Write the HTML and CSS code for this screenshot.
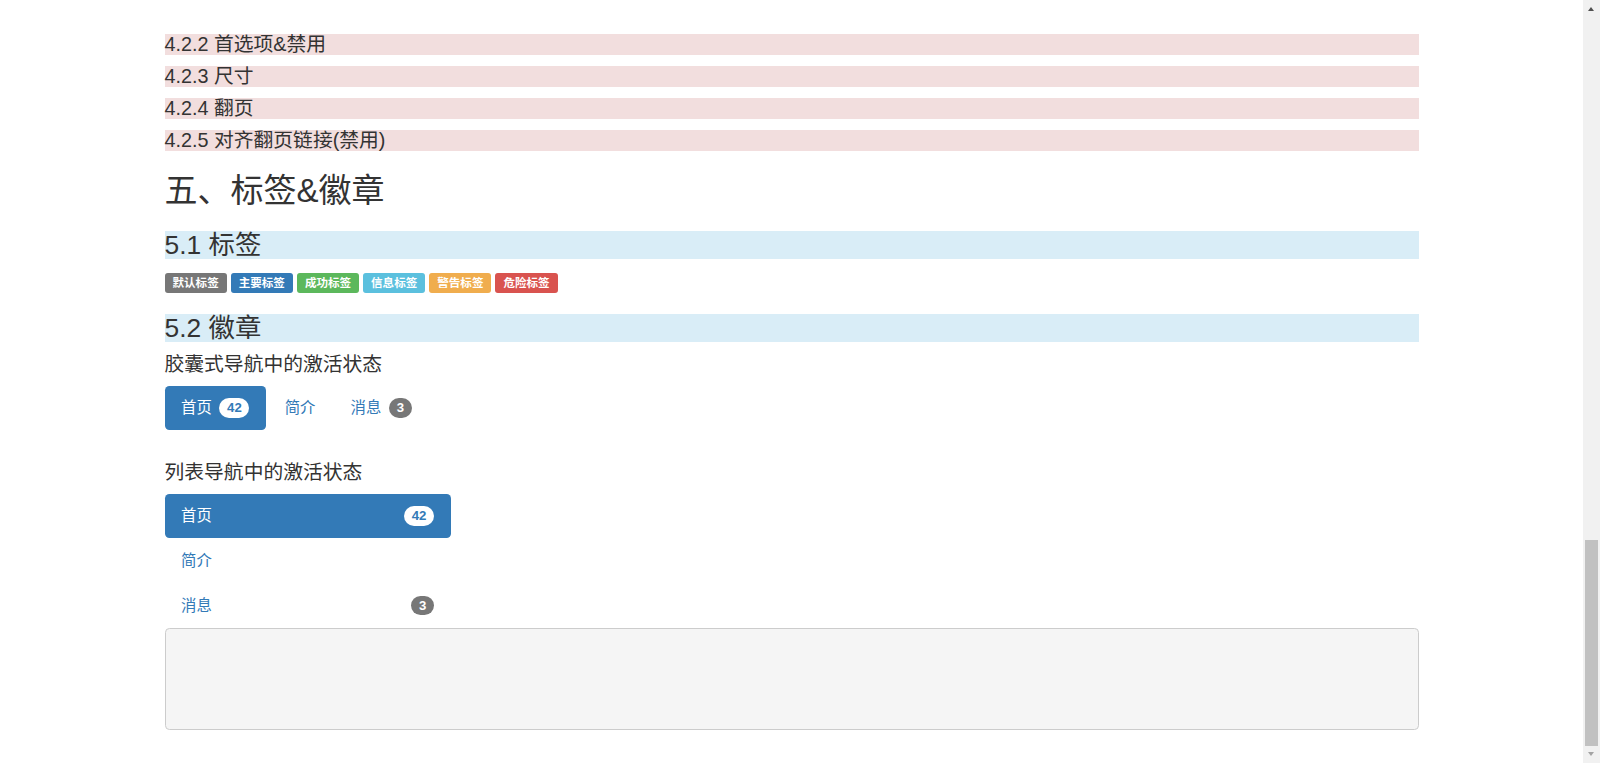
FILE: index.html
```html
<!DOCTYPE html>
<html lang="zh-CN">
<head>
<meta charset="utf-8">
<title>标签&amp;徽章</title>
<link rel="stylesheet" href="styles.css">
</head>
<body>
<div class="page">
  <div class="container">
    <h4 class="bg-danger">4.2.2 首选项&amp;禁用</h4>
    <h4 class="bg-danger">4.2.3 尺寸</h4>
    <h4 class="bg-danger">4.2.4 翻页</h4>
    <h4 class="bg-danger">4.2.5 对齐翻页链接(禁用)</h4>
    <h2>五、标签&amp;徽章</h2>
    <h3 class="bg-info">5.1 标签</h3>
    <div class="labels">
      <span class="label label-default">默认标签</span>
      <span class="label label-primary">主要标签</span>
      <span class="label label-success">成功标签</span>
      <span class="label label-info">信息标签</span>
      <span class="label label-warning">警告标签</span>
      <span class="label label-danger">危险标签</span>
    </div>
    <h3 class="bg-info h3-second">5.2 徽章</h3>
    <h4 class="caption">胶囊式导航中的激活状态</h4>
    <ul class="nav nav-pills">
      <li class="active"><a href="#">首页<span class="badge">42</span></a></li>
      <li><a href="#">简介</a></li>
      <li><a href="#">消息<span class="badge">3</span></a></li>
    </ul>
    <h4 class="caption caption-list">列表导航中的激活状态</h4>
    <ul class="nav nav-stacked">
      <li class="active"><a href="#">首页<span class="badge">42</span></a></li>
      <li><a href="#">简介</a></li>
      <li><a href="#">消息<span class="badge">3</span></a></li>
    </ul>
    <pre class="box"></pre>
  </div>
</div>
<div class="scrollbar">
  <span class="sb-up"></span>
  <span class="sb-thumb"></span>
  <span class="sb-down"></span>
</div>
</body>
</html>
```
FILE: styles.css
```css
html, body {
  margin: 0;
  padding: 0;
}
body {
  font-family: "Liberation Sans", "Noto Sans CJK SC", sans-serif;
  font-size: 15.4px;
  line-height: 22px;
  color: #333;
  background: #fff;
}
.page {
  width: 1583px;
}
.container {
  width: 1254px;
  margin: 0 auto;
  padding-top: 34px;
}
h2, h3, h4 {
  font-weight: 400;
  color: #333;
}
h4 {
  font-size: 19.8px;
  line-height: 21px;
  height: 21px;
  margin: 0 0 11px;
}
h2 {
  font-size: 33px;
  line-height: 36px;
  margin: 22px 0 0;
}
h3 {
  font-size: 26.4px;
  line-height: 28px;
  margin: 22px 0 11px;
}
.h3-second {
  margin-top: 21px;
}
.bg-danger {
  background-color: #f2dede;
}
.bg-info {
  background-color: #d9edf7;
}
.labels {
  display: flex;
  gap: 4px;
  padding-top: 3px;
}
.label {
  display: flex;
  align-items: center;
  justify-content: center;
  height: 20px;
  padding: 0 8px;
  font-size: 11.55px;
  font-weight: 700;
  color: #fff;
  border-radius: 2.9px;
  white-space: nowrap;
}
.label-default { background: #777; }
.label-primary { background: #337ab7; }
.label-success { background: #5cb85c; }
.label-info { background: #5bc0de; }
.label-warning { background: #f0ad4e; }
.label-danger { background: #d9534f; }
.caption {
  height: 22px;
  line-height: 22px;
  margin: 0 0 11px;
}
.caption-list {
  margin-top: 31px;
}
.nav {
  list-style: none;
  margin: 0;
  padding: 0;
}
.nav a {
  display: flex;
  align-items: center;
  padding: 11px 16.5px;
  line-height: 22px;
  border-radius: 4.4px;
  color: #337ab7;
  text-decoration: none;
}
.nav-pills {
  display: flex;
}
.nav-pills li + li {
  margin-left: 2.2px;
}
.nav-stacked {
  width: 286px;
}
.nav-stacked li + li {
  margin-top: 0.8px;
}
.nav-stacked a {
  justify-content: space-between;
}
.nav .active a {
  background: #337ab7;
  color: #fff;
}
.badge {
  display: inline-block;
  box-sizing: border-box;
  min-width: 11px;
  padding: 3.3px 7.7px;
  font-size: 13.2px;
  font-weight: 700;
  line-height: 1;
  color: #fff;
  text-align: center;
  background: #777;
  border-radius: 11px;
  margin-left: 7.6px;
}
.nav .active .badge {
  background: #fff;
  color: #337ab7;
}
.box {
  box-sizing: border-box;
  height: 102px;
  margin: 0;
  background: #f5f5f5;
  border: 1px solid #ccc;
  border-radius: 4.4px;
}
.scrollbar {
  position: fixed;
  top: 0;
  right: 0;
  width: 17px;
  height: 100vh;
  background: #f1f1f1;
}
.sb-up {
  position: absolute;
  top: 7px;
  left: 5px;
  width: 0;
  height: 0;
  border-left: 3.5px solid transparent;
  border-right: 3.5px solid transparent;
  border-bottom: 4px solid #505050;
}
.sb-thumb {
  position: absolute;
  top: 540px;
  left: 2px;
  width: 13px;
  height: 206px;
  background: #c1c1c1;
}
.sb-down {
  position: absolute;
  bottom: 7px;
  left: 5px;
  width: 0;
  height: 0;
  border-left: 3.5px solid transparent;
  border-right: 3.5px solid transparent;
  border-top: 4px solid #a3a3a3;
}
```
